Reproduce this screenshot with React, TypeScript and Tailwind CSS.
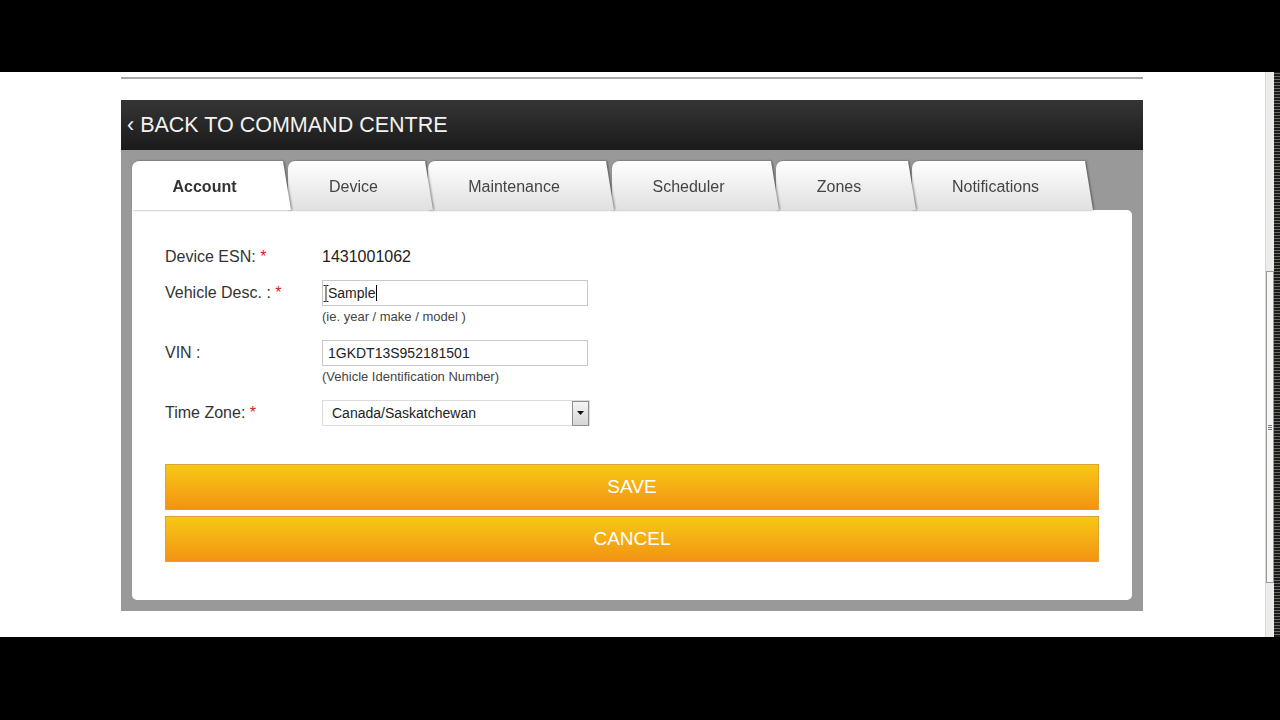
import React from "react";

const tabs = [
  { label: "Account", w: "w-[159px]", ml: "", z: "z-[6]", active: true },
  { label: "Device", w: "w-[145px]", ml: "-ml-[3px]", z: "z-[5]", active: false },
  { label: "Maintenance", w: "w-[186px]", ml: "-ml-[5px]", z: "z-[4]", active: false },
  { label: "Scheduler", w: "w-[167px]", ml: "-ml-[2px]", z: "z-[3]", active: false },
  { label: "Zones", w: "w-[140px]", ml: "-ml-[3px]", z: "z-[2]", active: false },
  { label: "Notifications", w: "w-[181px]", ml: "-ml-[4px]", z: "z-[1]", active: false },
];

const Req = () => <span className="text-[#d42020]"> *</span>;

const Tab = ({ tab }: { tab: (typeof tabs)[number] }) => (
  <div className={`relative ${tab.z} ${tab.ml} ${tab.w} h-[49px] [filter:drop-shadow(1px_0_1px_rgba(0,0,0,0.45))]`}>
    <div
      className={`h-full rounded-tl-[7px] [clip-path:polygon(0_0,calc(100%_-_8px)_0,100%_100%,0_100%)] flex items-center justify-center pt-[2px] pr-[14px] text-[16px] ${
        tab.active
          ? "bg-white font-bold text-[#333]"
          : "bg-linear-to-b from-white to-[#e0e0e0] text-[#444]"
      }`}
    >
      {tab.label}
    </div>
  </div>
);

const OrangeButton = ({ label }: { label: string }) => (
  <button className="h-[46px] w-full border border-[#dba237] bg-linear-to-b from-[#f6c815] to-[#f39214] text-[19px] text-white">
    {label}
  </button>
);

export default function App() {
  return (
    <div className="flex h-[720px] w-[1280px] flex-col bg-black font-['Liberation_Sans',Arial,sans-serif]">
      <div className="h-[72px]" />
      <div className="flex h-[565px] bg-white">
        {/* page content */}
        <div className="flex-1 pl-[121px]">
          <div className="w-[1022px]">
            <div className="mt-[5px] h-[2px] bg-[#a9a9a9]" />

            <div className="mt-[21px] flex h-[50px] items-center bg-linear-to-b from-[#353535] to-[#1b1b1b] pl-[6px] text-[21.5px] text-[#f2f2f2]">
              ‹ BACK TO COMMAND CENTRE
            </div>

            <div className="bg-[#999] p-[11px]">
              <div className="flex">
                {tabs.map((t) => (
                  <Tab key={t.label} tab={t} />
                ))}
              </div>

              <div className="rounded-tr-[5px] rounded-b-[5px] bg-white px-[33px] pt-[33px] pb-[38px] text-[16px] text-[#333]">
                <div className="flex h-[26px] items-center pt-[2px]">
                  <div className="w-[157px]">
                    Device ESN:<Req />
                  </div>
                  <div className="text-[#222]">1431001062</div>
                </div>

                <div className="mt-[11px] flex h-[26px] items-center">
                  <div className="w-[157px]">
                    Vehicle Desc. :<Req />
                  </div>
                  <div className="relative flex h-[26px] w-[266px] items-center border border-[#c8c8c8] pl-[5px] text-[14px] text-[#222]">
                    Sample
                    <span className="ml-[1px] h-[16px] w-[1px] bg-black" />
                    <svg className="absolute left-[0px] top-[4px]" width="6" height="17" viewBox="0 0 6 17">
                      <path d="M0.5 0.5h2l0.5 0.5 0.5-0.5h2M3 1v15M0.5 16.5h2l0.5-0.5 0.5 0.5h2" stroke="#222" strokeWidth="1" fill="none" />
                    </svg>
                  </div>
                </div>
                <div className="mt-[3px] h-[16px] pl-[157px] text-[13px] leading-[16px] text-[#444]">
                  (ie. year / make / model )
                </div>

                <div className="mt-[15px] flex h-[26px] items-center">
                  <div className="w-[157px]">VIN :</div>
                  <div className="flex h-[26px] w-[266px] items-center border border-[#c8c8c8] pl-[5px] text-[14px] text-[#222]">
                    1GKDT13S952181501
                  </div>
                </div>
                <div className="mt-[3px] h-[16px] pl-[157px] text-[13px] leading-[16px] text-[#444]">
                  (Vehicle Identification Number)
                </div>

                <div className="mt-[15px] flex h-[26px] items-center">
                  <div className="w-[157px]">
                    Time Zone:<Req />
                  </div>
                  <div className="flex h-[26px] w-[268px] items-center justify-between border border-[#dcdcdc] text-[14px] text-[#222]">
                    <span className="pl-[9px]">Canada/Saskatchewan</span>
                    <span className="flex h-[25px] w-[17px] items-center justify-center border border-[#8e8e8e] bg-linear-to-b from-[#f4f4f4] to-[#d6d6d6]">
                      <svg width="7" height="4" viewBox="0 0 7 4">
                        <path d="M0 0h7L3.5 4z" fill="#111" />
                      </svg>
                    </span>
                  </div>
                </div>

                <div className="mt-[38px] flex flex-col gap-[6px]">
                  <OrangeButton label="SAVE" />
                  <OrangeButton label="CANCEL" />
                </div>
              </div>
            </div>
          </div>
        </div>

        {/* browser scrollbar */}
        <div className="flex w-[9px] flex-col border-l border-[#d8d8d8] bg-[#ececec]">
          <div className="h-[199px]" />
          <div className="flex h-[312px] items-center justify-center border border-[#9a9a9a] bg-[#f6f6f6]">
            <div className="flex flex-col gap-[1px]">
              <div className="h-[1px] w-[4px] bg-[#777]" />
              <div className="h-[1px] w-[4px] bg-[#777]" />
              <div className="h-[1px] w-[4px] bg-[#777]" />
            </div>
          </div>
        </div>
        <div className="w-[6px] bg-[repeating-linear-gradient(0deg,#1a1a1a_0px,#1a1a1a_2px,#6a6f66_2px,#6a6f66_3px)]" />
      </div>
      <div className="h-[83px]" />
    </div>
  );
}
